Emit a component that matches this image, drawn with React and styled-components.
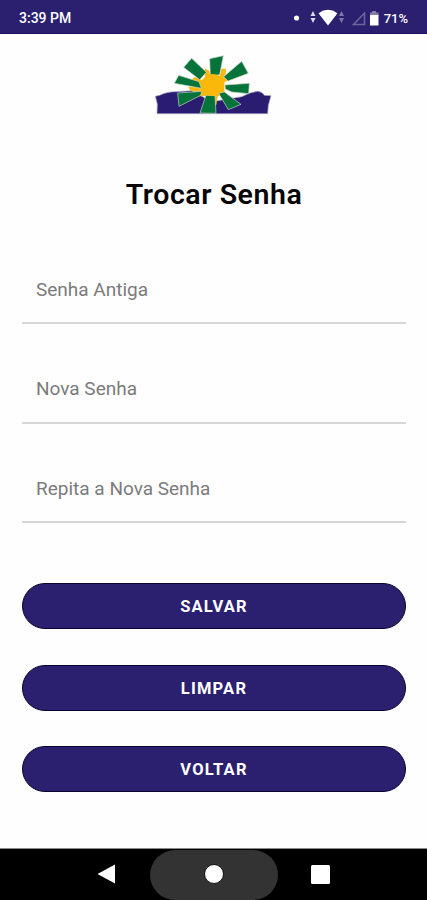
import React, { useState } from "react";
import styled, { createGlobalStyle } from "styled-components";

const GlobalStyle = createGlobalStyle`
  * {
    box-sizing: border-box;
  }
  body {
    margin: 0;
    background-color: #fff;
    font-family: Roboto, "Liberation Sans", sans-serif;
  }
`;
const Screen = styled.div`
  display: flex;
  flex-direction: column;
  width: 100%;
  height: 900px;
  background-color: #fefefe;
`;
const StatusBar = styled.header`
  display: flex;
  align-items: center;
  justify-content: space-between;
  height: 34px;
  padding: 3px 19px 0 19px;
  background-color: #2b1f6f;
  border-bottom: 1px solid #1c1063;
  color: #fff;
  font-size: 14px;
  font-weight: 500;
`;
const Clock = styled.span`
  letter-spacing: 0;
`;
const StatusIcons = styled.div`
  display: flex;
  align-items: center;
  gap: 4px;
`;
const Battery = styled.span`
  font-size: 13px;
  letter-spacing: 0;
`;
const Main = styled.main`
  flex: 1;
  display: flex;
  flex-direction: column;
  padding: 16px 21px 0 22px;
`;
const LogoBox = styled.div`
  display: flex;
  justify-content: center;
  height: 68px;
`;
const Title = styled.h1`
  margin: 60px 0 0;
  height: 34px;
  line-height: 34px;
  font-size: 28.5px;
  font-weight: 600;
  letter-spacing: 0.55px;
  text-align: center;
  color: #050505;
`;
const Form = styled.form`
  display: flex;
  flex-direction: column;
  margin-top: 41px;
`;
const Field = styled.input`
  width: 100%;
  height: 71px;
  margin-bottom: 28.6px;
  padding: 3px 14px 0;
  border: 0;
  border-bottom: 2px solid #d6d6d6;
  outline: 0;
  background-color: transparent;
  font-family: inherit;
  font-size: 19px;
  letter-spacing: 0;
  color: #222;

  &::placeholder {
    color: #7b7b7b;
    opacity: 1;
  }
`;
const Buttons = styled.div`
  display: flex;
  flex-direction: column;
  gap: 35.5px;
  margin-top: 31.3px;
`;
const Button = styled.button`
  width: 100%;
  height: 46px;
  padding: 1px 0 0;
  border: 1.5px solid #08032c;
  border-radius: 23px;
  background-color: #2b1f6f;
  color: #fff;
  font-family: inherit;
  font-size: 16.5px;
  font-weight: 700;
  letter-spacing: 1.2px;
`;
const NavBar = styled.nav`
  display: flex;
  align-items: stretch;
  justify-content: center;
  height: 52px;
  border-top: 1px solid #8a8a8a;
  background-color: #000;
`;
const NavItem = styled.div`
  display: flex;
  align-items: center;
  justify-content: center;
  width: ${(props) => (props.$active ? "128px" : "86px")};
  margin-top: 1px;
  padding-bottom: 2px;
  border-radius: 25px;
  background-color: ${(props) => (props.$active ? "#333" : "transparent")};
`;

function Logo() {
  return (
    <svg width="128" height="68" viewBox="15 15 384 204">
      {/* montanhas */}
      <path
        d="M31 154 L44 151 Q66 139 96 140 L140 137 L200 170 L290 155 Q315 142 337 139 Q352 140 358 151 L378 152 L370 181 L368 206 L36 206 L37 178 Z"
        fill="#2a1c70"
        stroke="#aaa6c5"
        strokeWidth="2"
      />
      {/* sol */}
      <path
        d="M180 71 L193 77 L196 92 L225 92 L229 71 L243 71 L242 87 L234 98 L260 83 L267 92 L247 108 L238 112 L238 140 L254 155 L262 168 L250 176 L228 150 L218 154 L214 180 L182 178 L184 153 L160 154 L165 141 L137 138 L130 126 L164 126 L139 106 L148 96 L171 105 L180 97 Z"
        fill="#f9b80a"
      />
      {/* raios */}
      <g fill="#05733a" stroke="#cbd8ca" strokeWidth="2">
        <path d="M194 41 L235 32 L224 89 L196 93 Z" />
        <path d="M140 40 L184 82 L164 104 L116 67 Z" />
        <path d="M290 49 L310 85 L249 108 L236 95 Z" />
        <path d="M101 91 L162 110 L169 130 L88 115 Z" />
        <path d="M240 120 L313 115 L311 146 L260 141 L241 132 Z" />
        <path d="M98 144 L170 139 L167 151 L102 184 Z" />
        <path d="M183 151 L210 152 L213 205 L165 204 Z" />
        <path d="M221 145 L238 141 L288 178 L250 194 Z" />
      </g>
      <circle cx="203" cy="120" r="33" fill="#f9b80a" />
    </svg>
  );
}

function SignalIcons() {
  return (
    <svg width="86" height="20" viewBox="294 7 86 20">
      <circle cx="296.5" cy="17" r="2.6" fill="#fff" />
      <path d="M313 10 L315.5 15 H310.5 Z M313 22 L310.5 17 H315.5 Z" fill="#dcd9ec" />
      <path d="M318.5 12.2 Q328 5.5 337.5 12.2 L328 24.5 Z" fill="#fff" />
      <path d="M341.5 10 L344 15 H339 Z M341.5 22 L339 17 H344 Z" fill="#8077a9" />
      <path d="M353.5 23.5 L364.5 12 V23.5 Z" fill="none" stroke="#71669c" strokeWidth="1.5" />
      <path d="M372 10 H376 V11.5 H378.5 V15 H370 V11.5 H372 Z" fill="#857cab" />
      <path d="M370 14 H378.5 V24.5 H370 Z" fill="#fff" />
    </svg>
  );
}

function App() {
  const [inputs, setInputs] = useState({
    senhaAntiga: "",
    novaSenha: "",
    repitaSenha: "",
  });
  const { senhaAntiga, novaSenha, repitaSenha } = inputs;

  const onChangeInputs = (e) => {
    const { name, value } = e.target;

    setInputs({
      ...inputs,
      [name]: value,
    });
  };

  const onClear = () => {
    setInputs({ senhaAntiga: "", novaSenha: "", repitaSenha: "" });
  };

  return (
    <>
      <GlobalStyle />
      <Screen>
        <StatusBar>
          <Clock>3:39 PM</Clock>
          <StatusIcons>
            <SignalIcons />
            <Battery>71%</Battery>
          </StatusIcons>
        </StatusBar>
        <Main>
          <LogoBox>
            <Logo />
          </LogoBox>
          <Title>Trocar Senha</Title>
          <Form onSubmit={(e) => e.preventDefault()}>
            <Field
              type="password"
              name="senhaAntiga"
              placeholder="Senha Antiga"
              value={senhaAntiga}
              onChange={onChangeInputs}
            />
            <Field
              type="password"
              name="novaSenha"
              placeholder="Nova Senha"
              value={novaSenha}
              onChange={onChangeInputs}
            />
            <Field
              type="password"
              name="repitaSenha"
              placeholder="Repita a Nova Senha"
              value={repitaSenha}
              onChange={onChangeInputs}
            />
            <Buttons>
              <Button type="submit">SALVAR</Button>
              <Button type="button" onClick={onClear}>
                LIMPAR
              </Button>
              <Button type="button">VOLTAR</Button>
            </Buttons>
          </Form>
        </Main>
        <NavBar>
          <NavItem>
            <svg width="20" height="20" viewBox="0 0 20 20">
              <path d="M0.5 10 L18 0.5 V19.5 Z" fill="#fff" />
            </svg>
          </NavItem>
          <NavItem $active>
            <svg width="20" height="20" viewBox="0 0 20 20">
              <circle cx="10" cy="10" r="9.5" fill="#fff" stroke="#111" />
            </svg>
          </NavItem>
          <NavItem>
            <svg width="19" height="19" viewBox="0 0 19 19">
              <rect width="19" height="19" rx="1.5" fill="#fff" />
            </svg>
          </NavItem>
        </NavBar>
      </Screen>
    </>
  );
}

export default App;
